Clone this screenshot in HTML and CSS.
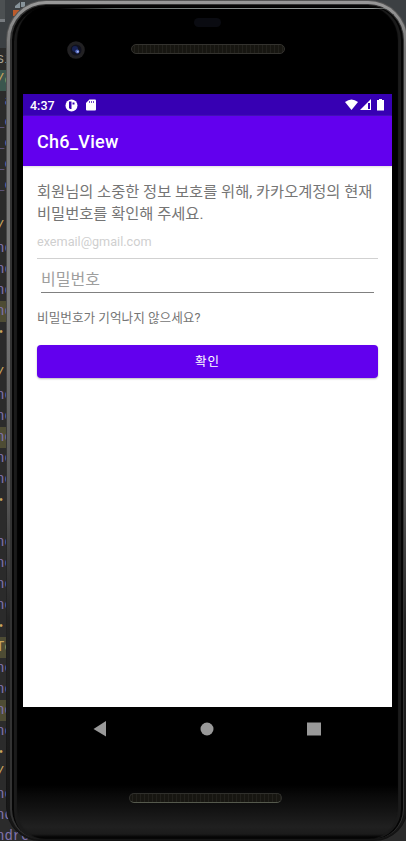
FILE: index.html
```html
<!DOCTYPE html>
<html lang="ko">
<head>
<meta charset="utf-8">
<title>Ch6_View</title>
<link rel="stylesheet" href="styles.css">
</head>
<body>
<div class="editor">
<div class="code"><p class="tag">si</p><p class="green gold">/o</p><p>&nbsp;a</p><p>_c</p><p>_c</p><p>_c</p><p>_c</p><p></p><p class="gold">/:</p><p>nd</p><p>nd</p><p>nd</p><p class="olive">nd</p><p class="gold dot">•</p><p></p><p class="gold">/:</p><p>nd</p><p>nd</p><p class="olive">nd</p><p>nd</p><p>nd</p><p class="gold dot">•</p><p></p><p>nd</p><p>nd</p><p>nd</p><p>nd</p><p class="gold dot">•</p><p class="olive gold">Te</p><p>nd</p><p>nd</p><p class="olive">nd</p><p>nd</p><p class="gold dot">•</p><p class="gold">/:</p><p>nd</p><p>nd</p><p>ndro</p></div>
</div>
<svg class="toolbar" width="42" height="22" viewBox="0 0 42 22"><path fill="#4c5052" d="M0 0h5v19H0z"/><path fill="#777b7f" d="M0 19h5v3H0z"/><path fill="#87939a" d="M15 6l5-4v6h-5zM21 2h4v5h-4z"/><path fill="#bd5b2b" d="M13 10h6v6h-6z"/></svg>
<div class="phone"><div class="rim"><div class="glass">
<div class="forehead">
<div class="sensor"></div>
<div class="earpiece"><svg class="camera" width="18" height="18" viewBox="0 0 18 18"><circle cx="9" cy="9" r="8.8" fill="#222123"/><circle cx="9" cy="9" r="5.5" fill="#10111e"/><circle cx="8" cy="8" r="3" fill="#172253"/><circle cx="10.3" cy="10.5" r="2" fill="#5368bd"/><circle cx="10.8" cy="10.7" r=".9" fill="#afbdf4"/></svg><div class="speaker"></div></div>
</div>
<main class="screen">
<div class="status"><span>4:37</span>
<svg width="13" height="13" viewBox="0 0 13 13"><circle cx="6.5" cy="6.5" r="6" fill="#fff"/><path fill="#3700b3" d="M4 2.5h2.5v7.5H5L4 9zM7.5 3.5h2v2h-2z"/></svg>
<svg class="sd" width="10" height="12" viewBox="0 0 10 12"><path fill="#fff" d="M3.4.5H9q1 0 1 1v9q0 1-1 1H1q-1 0-1-1V4z"/><path stroke="#3700b3" stroke-width=".7" d="M3.5 2v2M5.5 2v2M7.5 2v2"/></svg>
<svg class="signals" width="40" height="12" viewBox="0 0 40 12"><path fill="#fff" d="M0 3Q6.5-2 13 3L6.5 11z"/><path fill="#fff" d="M26 0v11H15z"/><path fill="#3700b3" d="M23 4h2v6h-2z"/><path fill="#fff" d="M34 0h3v1h2v10.5h-7V1h2z"/></svg>
</div>
<header>Ch6_View</header>
<section class="content">
<p class="message">회원님의 소중한 정보 보호를 위해, 카카오계정의 현재<br>비밀번호를 확인해 주세요.</p>
<div class="email">exemail@gmail.com</div>
<div class="password">비밀번호</div>
<div class="forgot">비밀번호가 기억나지 않으세요?</div>
<div class="confirm">확인</div>
</section>
</main>
<nav><svg width="14" height="16" viewBox="0 0 14 16"><path fill="#999" d="M13 0v15.5L.5 8z"/></svg><svg width="14" height="14" viewBox="0 0 14 14"><circle cx="7" cy="7" r="6.5" fill="#999"/></svg><svg width="14" height="14" viewBox="0 0 14 14"><path fill="#999" d="M0 .5h14v13H0z"/></svg></nav>
<div class="chin"><div class="speaker"></div></div>
</div></div></div>
</body>
</html>
```
FILE: styles.css
```css
* { box-sizing: border-box; }
body { margin: 0; width: 406px; height: 841px; overflow: hidden; display: grid; grid-template-columns: 406px; background: #2b2b2b; font-family: Roboto, "Noto Sans CJK KR", sans-serif; }
p { margin: 0; }
svg { display: block; flex: none; }
.editor, .phone, .toolbar { grid-area: 1 / 1; }
.editor { height: 841px; overflow: hidden; padding-top: 49px; background: linear-gradient(#3c4043 0 48px, #2b2b2b 48px); }
.code { font: 14px/21px "Liberation Mono", monospace; color: #8173ad; }
.code p { height: 21px; white-space: nowrap; text-indent: -4px; }
.code .tag { color: #a9a394; }
.code .green { background: #3a564e; }
.code .olive { background: #4e4c34; }
.code .gold { color: #c9a65d; }
.code .dot { font-size: 10px; text-indent: -2px; }
.phone { margin-left: 6px; width: 402px; height: 841px; border-radius: 40px 40px 34px 34px; padding: 1px; background: linear-gradient(#555, #444 40%, #252525 65%, #111); overflow: hidden; }
.rim { height: 839px; border-radius: 39px 39px 33px 33px; padding: 3px 3px 1px 3px; background: linear-gradient(#999 0, #777 50px, #777 300px, #555 500px, #242424 620px, #151515); }
.glass { height: 835px; border-radius: 36px 36px 30px 30px; border: solid #333; border-width: 1px 1px 0 2px; border-bottom-color: #080808; box-shadow: inset 2px 2px 0 #050505, inset 5px 0 1px #1b1b1b, inset -2px 0 0 #050505, inset -5px 0 1px #1b1b1b; background: linear-gradient(#000 0 780px, #090909 790px, #131313 805px, #202020 822px, #1b1b1b 829px, #050505 832px); padding: 3px 9px 0 11px; }
.forehead { height: 86px; border-top: 1px solid #8e9593; border-image: linear-gradient(90deg, transparent 10%, #69716f 25%, #929896 75%, #929896 94%, transparent) 1; padding-top: 9px; }
.sensor { width: 27px; height: 9px; margin-left: 171px; border-radius: 5px; background: #0a0b11; }
.earpiece { display: flex; align-items: center; gap: 46px; margin: 14px 0 0 44px; height: 18px; }
.speaker { width: 154px; height: 10px; border: 1px solid #34332f; border-radius: 5px; background: repeating-linear-gradient(90deg, #171611 0 2px, #22211c 2px 3px, #171611 3px 4px); }
.earpiece .speaker { margin-top: -3px; }
.screen { width: 369px; height: 613px; background: #fff; overflow: hidden; }
.status { height: 22px; display: flex; align-items: center; padding: 0 7px; background: #3700b3; color: #fff; font-size: 12.5px; font-weight: 500; }
.status span { width: 35px; white-space: nowrap; }
.sd { margin-left: 8px; }
.signals { margin-left: auto; }
header { height: 50px; padding-left: 14px; line-height: 51px; background: #6200ee; color: #fff; font-size: 18px; font-weight: 500; letter-spacing: .3px; box-shadow: 0 1px 2px #ddd; }
.content { padding: 14px 14px 0; color: #757575; }
.message { padding-top: 1px; font-size: 15.3px; line-height: 22px; white-space: nowrap; }
.email { height: 34px; padding-top: 7px; border-bottom: 1px solid #d1d1d1; font-size: 12.65px; line-height: 20px; color: #cfcfcf; }
.password { height: 34px; margin: 0 4px; border-bottom: 1px solid #808080; font-size: 16px; line-height: 42px; color: #9e9e9e; }
.forgot { margin-top: 15px; font-size: 12.65px; line-height: 20px; }
.confirm { height: 33px; margin-top: 17px; border-radius: 4px; background: #6200ee; color: #fff; font-size: 12.5px; letter-spacing: 1px; line-height: 34px; text-align: center; box-shadow: 0 1px 2px #bbb; }
nav { height: 43px; display: flex; align-items: center; justify-content: space-between; padding: 0 73px 0 70px; }
.chin { padding: 43px 0 0 106px; }
.chin .speaker { width: 153px; border-color: #30302c; border-bottom-color: #55594d; }
```
